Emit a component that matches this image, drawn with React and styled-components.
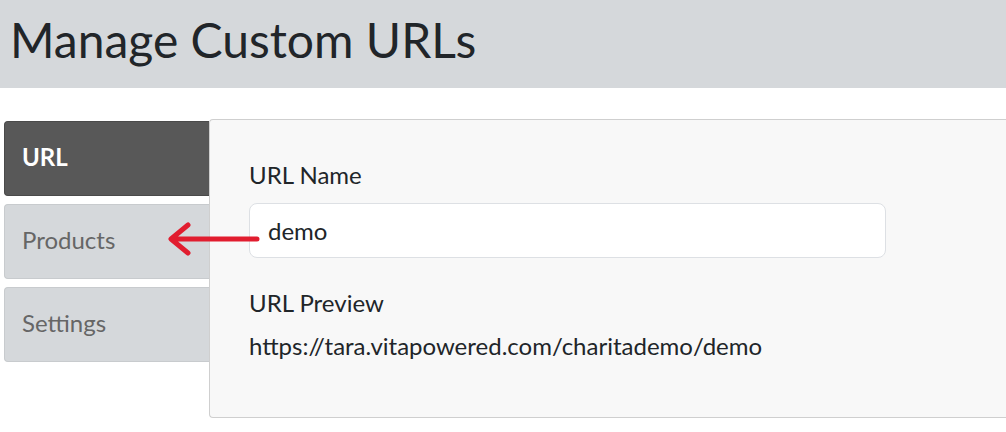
import React from "react";
import styled, { createGlobalStyle } from "styled-components";

const GlobalStyle = createGlobalStyle`
  body {
    margin: 0;
    background: #fff;
    font-family: Lato, "Open Sans", sans-serif;
    color: #212529;
  }
`;

const Header = styled.header`
  height: 88px;
  box-sizing: border-box;
  background-color: #d5d8db;
  padding: 11px 0 0 10px;
`;

const Title = styled.h1`
  margin: 0;
  font-size: 48px;
  line-height: 1.2;
  font-weight: 400;
  color: #212529;
`;

const Body = styled.div`
  position: relative;
  display: flex;
  padding: 31px 0 0 4px;
`;

const Tabs = styled.nav`
  width: 205px;
  display: flex;
  flex-direction: column;
  gap: 8px;
  margin-top: 2px;
`;

const Tab = styled.div`
  height: 75px;
  display: flex;
  align-items: center;
  padding: 0 0 4px 17px;
  border: 1px solid ${(props) => (props.active ? "#4a4a4a" : "#c8cbce")};
  border-right: none;
  border-radius: 4px 0 0 4px;
  background-color: ${(props) => (props.active ? "#585858" : "#d5d8db")};
  color: ${(props) => (props.active ? "#fff" : "#666")};
  font-size: 24px;
  font-weight: ${(props) => (props.active ? 700 : 400)};
  box-sizing: border-box;
`;

const Panel = styled.section`
  flex: 1;
  height: 299px;
  box-sizing: border-box;
  background-color: #f8f8f8;
  border: 1px solid #cfcfcf;
  border-right: none;
  border-radius: 4px 0 0 4px;
  padding: 41px 0 0 39px;
`;

const Label = styled.div`
  font-size: 24px;
  line-height: 1.2;
  color: #212529;
`;

const Input = styled.div`
  width: 637px;
  height: 55px;
  box-sizing: border-box;
  margin: 13px 0 31px;
  display: flex;
  align-items: center;
  padding-left: 18px;
  background-color: #fff;
  border: 1px solid #dde0e4;
  border-radius: 8px;
  font-size: 24px;
  color: #212529;
`;

const Preview = styled.div`
  margin-top: 14px;
  font-size: 24px;
  line-height: 1.2;
  color: #212529;
`;

const Arrow = styled.svg`
  position: absolute;
  left: 166px;
  top: 131px;
`;

export default function App() {
  return (
    <>
      <GlobalStyle />
      <Header>
        <Title>Manage Custom URLs</Title>
      </Header>
      <Body>
        <Tabs>
          <Tab active>URL</Tab>
          <Tab>Products</Tab>
          <Tab>Settings</Tab>
        </Tabs>
        <Panel>
          <Label>URL Name</Label>
          <Input>demo</Input>
          <Label>URL Preview</Label>
          <Preview>https://tara.vitapowered.com/charitademo/demo</Preview>
        </Panel>
        <Arrow width="96" height="40" viewBox="0 0 96 40">
          <path
            d="M91 20 H6 M22 6 L5 20 L22 34"
            fill="none"
            stroke="#e11d2f"
            strokeWidth="5"
            strokeLinecap="round"
            strokeLinejoin="round"
          />
        </Arrow>
      </Body>
    </>
  );
}
